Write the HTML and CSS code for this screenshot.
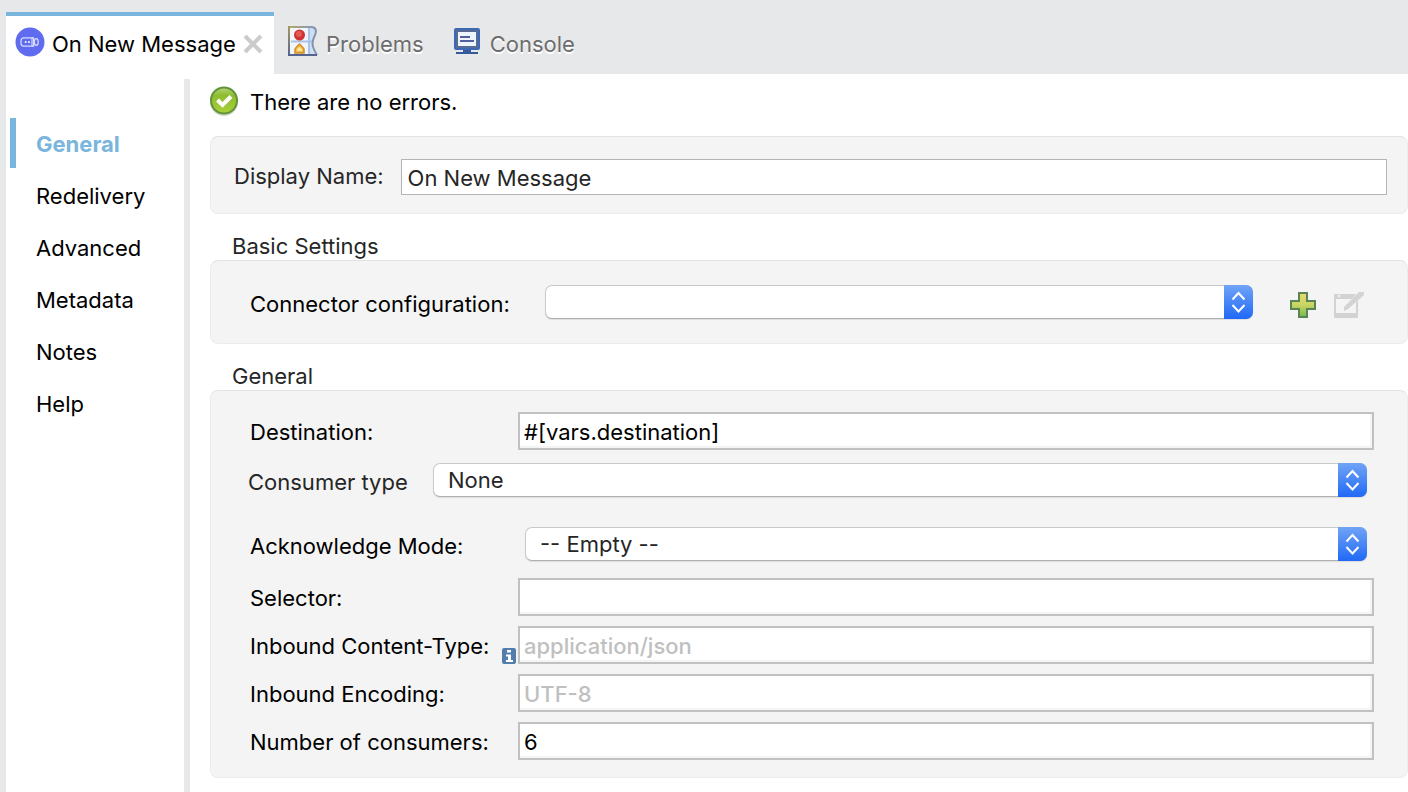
FILE: index.html
```html
<!DOCTYPE html>
<html lang="en">
<head>
<meta charset="utf-8">
<title>On New Message</title>
<link rel="stylesheet" href="styles.css">
</head>
<body>
<div class="app">
  <header class="tabs">
    <div class="tab tab-active">
      <svg class="icon-round" viewBox="0 0 30 30" aria-hidden="true"><circle cx="15" cy="15" r="14.5" fill="#5f6cf0"/><g fill="none" stroke="#d9dcff" stroke-width="1.200"><path d="M17 10.800H9a3 3 0 0 0-3 3v2.400a3 3 0 0 0 3 3h8z"/><path d="M17 10.800h1.600v8.400H17"/><ellipse cx="21.300" cy="15" rx="1.900" ry="3.300"/></g><g fill="#fff"><circle cx="10.700" cy="15" r="1"/><circle cx="14" cy="15" r="1"/></g></svg>
      <button class="tab-name">On New Message</button>
      <button class="tab-close" aria-label="Close"><svg class="icon-close" viewBox="0 0 20 20" aria-hidden="true"><path d="M2 2l16 16M18 2L2 18" stroke="#cbcbcb" stroke-width="4" fill="none"/></svg></button>
    </div>
    <button class="tab tab-idle">
      <svg class="icon-tab" viewBox="0 0 30 30" aria-hidden="true"><defs><linearGradient id="edge" x1="0" y1="0" x2="0" y2="1"><stop offset="0" stop-color="#a89a5c"/><stop offset="1" stop-color="#56638d"/></linearGradient><linearGradient id="top" x1="0" y1="0" x2="1" y2="0"><stop offset="0" stop-color="#b5a66a"/><stop offset="1" stop-color="#8c99b4"/></linearGradient></defs><path d="M1 1h22c5 0 6 4 4 8-4 8-3 12 2 20H1z" fill="#f1f6fd"/><path d="M21 2h2c4 0 5 3 3 7-3 7-3 12 1 19h-6z" fill="#cfdff3"/><path d="M21 2v26M3 15.500h21" stroke="#a9c4ea" stroke-width="2"/><path d="M23 1c5 0 6 4 4 8-4 8-3 12 2 20" fill="none" stroke="#8590ab" stroke-width="2"/><path d="M1 0h22v2H1z" fill="url(#top)"/><path d="M0 0h2v30H0z" fill="url(#edge)"/><path d="M0 28h29v2H0z" fill="#56638d"/><circle cx="11.500" cy="9" r="5.500" fill="#cf3434"/><circle cx="11" cy="8" r="3" fill="#e25a50"/><path d="M7 27v-4q1-2 4.500-5 3.500 3 4.500 5v4z" fill="#f3b94a" stroke="#d08f2e" stroke-width="1.500"/><path d="M9 25v-2l2.500-2 2.500 2v2z" fill="#ffe694"/></svg>
      Problems
    </button>
    <button class="tab tab-idle">
      <svg class="icon-tab" viewBox="0 0 30 30" aria-hidden="true"><rect x="2" y="2" width="26" height="22" rx="2" fill="#3c69b1"/><rect x="4" y="4" width="22" height="18" fill="#566b93"/><rect x="6" y="6" width="18" height="14" fill="#eef4fd"/><path d="M8 11h10M8 15h14" stroke="#5161a0" stroke-width="2"/><path d="M11 24h8v2h7v2H4v-2h7z" fill="#345a9c"/></svg>
      Console
    </button>
  </header>
  <div class="body">
    <nav class="side">
      <a class="side-link side-current" href="#general">General</a>
      <a class="side-link" href="#redelivery">Redelivery</a>
      <a class="side-link" href="#advanced">Advanced</a>
      <a class="side-link" href="#metadata">Metadata</a>
      <a class="side-link" href="#notes">Notes</a>
      <a class="side-link" href="#help">Help</a>
    </nav>
    <main class="content">
      <p class="status">
        <svg class="icon-status" viewBox="0 0 28 30" aria-hidden="true"><defs><linearGradient id="ok" x1="0" y1="0" x2="0" y2="1"><stop offset="0" stop-color="#b5d678"/><stop offset=".3" stop-color="#8dbd2f"/><stop offset="1" stop-color="#a9d13a"/></linearGradient></defs><circle cx="14" cy="16" r="14" fill="#d6d9d0"/><circle cx="14" cy="14.500" r="13" fill="url(#ok)" stroke="#63943a" stroke-width="2"/><path d="M7.500 14l5 5 8.500-8.500" fill="none" stroke="#fff" stroke-width="4"/></svg>
        There are no errors.
      </p>
      <section class="panel name-panel">
        <label class="soft" for="display">Display Name:</label>
        <input class="name-box" id="display" type="text" value="On New Message">
      </section>
      <h2 class="heading">Basic Settings</h2>
      <section class="panel config-panel">
        <label class="config-label" for="config">Connector configuration:</label>
        <div class="picker"><select id="config"><option></option></select><svg class="arrows" viewBox="0 0 29 34" aria-hidden="true"><path d="M8.500 14.500l6-6.500 6 6.500M8.500 20l6 6.500 6-6.500"/></svg></div>
        <div class="tools">
          <button class="tool" aria-label="Add"><svg viewBox="0 0 28 28" aria-hidden="true"><defs><linearGradient id="plus" x1="0" y1="0" x2="0" y2="1"><stop offset="0" stop-color="#ead873"/><stop offset=".5" stop-color="#c9d562"/><stop offset="1" stop-color="#75b94f"/></linearGradient></defs><path d="M10 2h8v8h8v8h-8v8h-8v-8H2v-8h8z" fill="url(#plus)" stroke="#5a8455" stroke-width="2"/></svg></button>
          <button class="tool" aria-label="Edit"><svg viewBox="0 0 32 28" aria-hidden="true"><path d="M1 3h22l-4 5H3v14h20V12l2-3v18H1z" fill="#d3d3d3"/><path d="M5 5h2" stroke="#f4f4f4" stroke-width="2"/><path d="M11 20v-4L26 1h5v3L15 18z" fill="#d3d3d3"/></svg></button>
        </div>
      </section>
      <h2 class="heading">General</h2>
      <section class="panel form">
        <div class="row"><label for="dest">Destination:</label><input class="box" id="dest" type="text" value="#[vars.destination]"></div>
        <div class="row row-consumer"><label class="soft" for="consumer">Consumer type</label><div class="picker"><select id="consumer"><option>None</option></select><svg class="arrows" viewBox="0 0 29 34" aria-hidden="true"><path d="M8.500 14.500l6-6.500 6 6.500M8.500 20l6 6.500 6-6.500"/></svg></div></div>
        <div class="row row-ack"><label for="ack">Acknowledge Mode:</label><div class="picker"><select id="ack"><option>-- Empty --</option></select><svg class="arrows" viewBox="0 0 29 34" aria-hidden="true"><path d="M8.500 14.500l6-6.500 6 6.500M8.500 20l6 6.500 6-6.500"/></svg></div></div>
        <div class="row"><label for="selector">Selector:</label><input class="box" id="selector" type="text"></div>
        <div class="row"><label for="ctype">Inbound Content-Type:</label><svg class="info" viewBox="0 0 14 16" aria-hidden="true"><rect width="14" height="16" rx="2" fill="#537dac"/><path d="M5 2h4v2.500H5zM4 6.500h5v5.500h2v2H4v-2h2V8.500H4z" fill="#fff"/></svg><input class="box" id="ctype" type="text" placeholder="application/json"></div>
        <div class="row"><label for="enc">Inbound Encoding:</label><input class="box" id="enc" type="text" placeholder="UTF-8"></div>
        <div class="row"><label for="num">Number of consumers:</label><input class="box" id="num" type="text" value="6"></div>
      </section>
    </main>
  </div>
</div>
</body>
</html>
```
FILE: styles.css
```css
* { box-sizing: border-box; }
body { margin: 0; background: #fff; color: #000; font-family: Inter, "Liberation Sans", sans-serif; font-size: 22px; line-height: 28px; }
button, input, select { font: inherit; color: inherit; }
button { border: 0; padding: 0; background: none; white-space: nowrap; }
svg { display: block; flex: none; }
.app { display: flex; flex-direction: column; min-height: 100vh; border-left: 6px solid #e7e8ea; }
.tabs { display: flex; height: 74px; padding-top: 12px; background: #e7e8ea; }
.tab { display: flex; align-items: center; }
.tab-active { width: 268px; padding: 0 11px 2px 9px; border-top: 4px solid #79b5dc; background: #fff; }
.tab-name { flex: 1; min-width: 0; margin-left: 7px; text-align: left; }
.tab-idle { gap: 8px; margin-left: 14px; padding-top: 2px; color: #6d6d6d; text-shadow: 0 2px 0 #fff; }
.tab-idle + .tab-idle { margin-left: 28px; }
.icon-round, .icon-tab { width: 30px; height: 30px; margin-bottom: 4px; }
.icon-tab { width: 30px; height: 30px; margin-bottom: 6px; }
.icon-status { width: 28px; height: 30px; margin-bottom: 2px; }
.icon-close { width: 20px; height: 20px; }
.body { display: flex; flex: 1; padding-top: 5px; }
.side { display: flex; flex-direction: column; gap: 2px; width: 184px; padding: 39px 0 0 4px; border-right: 6px solid #e7e8ea; }
.side-link { height: 50px; padding-left: 20px; border-left: 6px solid transparent; color: #000; line-height: 52px; text-decoration: none; }
.side-current { border-color: #79b5dc; color: #79b5dc; font-weight: 700; }
.content { flex: 1; min-width: 0; padding: 6px 0 0 20px; }
.status { display: flex; align-items: center; gap: 12px; height: 34px; margin: 0 0 17px; }
.soft, .heading, select, .name-box { color: #262626; }
.panel { border: 1px solid #ececec; border-top-color: #e2e2e2; border-radius: 8px; background: #f4f4f4; }
.name-panel { display: flex; align-items: center; gap: 17px; height: 78px; padding: 4px 20px 0 23px; }
.name-panel label { padding-bottom: 2px; }
.name-box { flex: 1; min-width: 0; height: 36px; padding: 2px 6px 0; border: 1px solid #b4b4b4; background: #fff; }
.heading { margin: 18px 0 0 22px; font-size: 22px; font-weight: 400; line-height: 28px; }
.config-panel { display: flex; align-items: center; height: 84px; padding: 0 42px 0 39px; }
.config-label { width: 295px; padding-top: 4px; }
.picker { display: grid; flex: 1; min-width: 0; height: 34px; }
.picker > * { grid-area: 1 / 1; }
select { appearance: none; width: 100%; height: 34px; padding: 0 30px 0 14px; border: 1px solid #c9c9c9; border-bottom-color: #b0b0b0; border-radius: 7px; background: #fff; box-shadow: 0 1px 1px #ddd; }
.arrows { justify-self: end; width: 29px; height: 34px; border-radius: 0 7px 7px 0; background: linear-gradient(#71a4f6, #1f69f6); pointer-events: none; fill: none; stroke: #fff; stroke-width: 2; }
.tools { display: flex; gap: 16px; margin-left: 36px; padding-top: 6px; }
.tool svg { height: 28px; }
.form { display: grid; gap: 10px; padding: 21px 33px 17px 39px; }
.row { display: flex; align-items: center; height: 38px; }
.row label { width: 268px; padding-top: 2px; }
.row .picker { margin-right: 7px; }
.row-consumer { height: 40px; }
.row-consumer label { width: 185px; margin-left: -2px; padding-top: 4px; }
.row-ack { margin: 15px 0 5px; }
.row-ack label { width: 275px; padding-top: 4px; }
.box { flex: 1; min-width: 0; height: 38px; padding: 1px 4px 0; border: 2px solid #c1c1c1; background: #fff; box-shadow: inset -2px -2px #f4f4f4; }
.box::placeholder { color: #c0c0c0; font-weight: 500; opacity: 1; }
.info { align-self: flex-end; width: 14px; height: 16px; margin: 0 2px 0 -16px; }
```
